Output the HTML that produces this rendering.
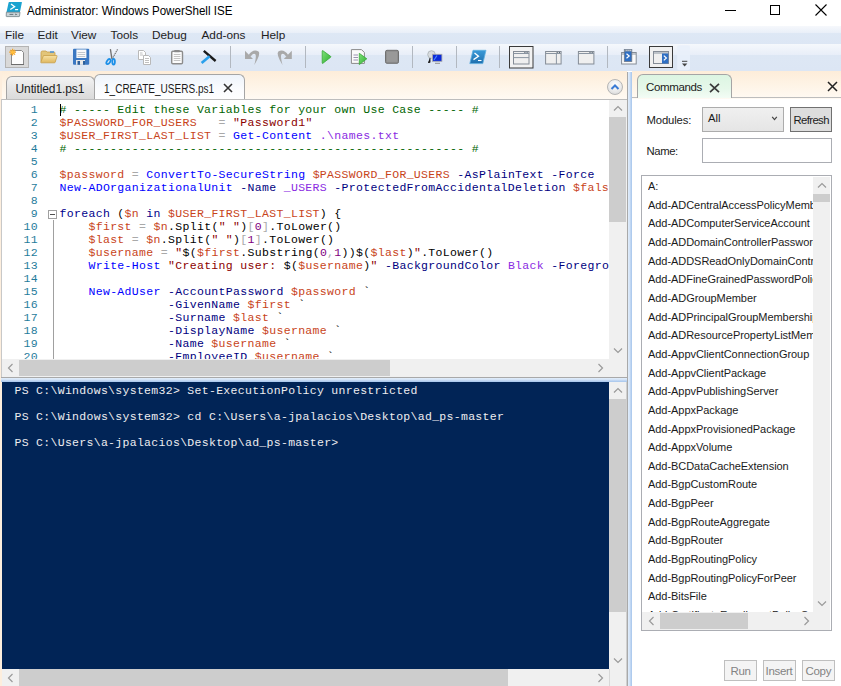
<!DOCTYPE html>
<html><head><meta charset="utf-8">
<style>
*{margin:0;padding:0;box-sizing:border-box}
html,body{width:841px;height:686px;overflow:hidden;background:#fff;position:relative;font-family:"Liberation Sans",sans-serif;font-size:12px;color:#000}
.a{position:absolute}
.t{position:absolute;white-space:pre;line-height:1}
#title{left:27px;top:4.6px;font-size:12.4px;color:#000;transform:scaleX(0.935);transform-origin:0 0}
#menubar{left:0;top:26px;width:841px;height:18px;background:linear-gradient(#f6f8fc 0,#e9eff8 7px,#dee8f5 7px,#dce6f4 100%)}
#toolbar{left:0;top:44px;width:841px;height:27px;background:linear-gradient(#f5f8fc 0,#e8eef8 11px,#dde7f4 11px,#dce6f4 100%)}
.menu{top:30.3px;font-size:11.8px;color:#1e1e1e}
.sep{position:absolute;top:46px;width:1px;height:22px;background:#b2b8c0}
#tabstrip{left:0;top:71px;width:627px;height:28px;background:linear-gradient(#fdedd9,#fffaf3)}
#lstrip{left:0;top:71px;width:2px;height:615px;background:#fdeedd}
.code{font-family:"Liberation Mono",monospace;font-size:11.5px;letter-spacing:0.33px;line-height:13px;white-space:pre}
.ln{color:#1f7c9c}
.cm{color:#006400}.vr{color:#c8441a}.st{color:#8b0000}.cd{color:#0000ff}.pa{color:#000080}.op{color:#a9a9a9}.kw{color:#00008b}.nu{color:#800080}.ar{color:#8a2be2}
.sbg{background:#f0f0f0}
.thumb{background:#cdcdcd}
.arr{position:absolute;width:6px;height:6px;border-left:1.2px solid #a0a0a0;border-top:1.2px solid #a0a0a0}
</style></head><body>
<!-- title bar -->
<svg class="a" style="left:0;top:0" width="26" height="20" viewBox="0 0 26 20">
<path d="M9.2 2.1H21.6Q22 2.1 21.9 2.6L19.9 12.2H6.5L8.6 2.6Q8.7 2.1 9.2 2.1Z" fill="#1ba3d0"/>
<path d="M6.4 12.2H20L19.5 16.2Q19.4 16.6 19 16.6H6.6Q6.2 16.6 6.2 16.2Z" fill="#c9d2d6" stroke="#6f8087" stroke-width="0.8"/>
<path d="M9.5 14.4H13.3" stroke="#5a6a70" stroke-width="0.9"/><path d="M15.3 13.5L17.4 14.4L15.3 15.3Z" fill="#5a6a70"/>
<path d="M11 4.1L14.6 6.8L10.3 9.5" stroke="#fff" stroke-width="1.3" fill="none"/>
<path d="M15.1 9.6H18.1" stroke="#fff" stroke-width="1.2"/>
</svg>
<div class="t" id="title">Administrator: Windows PowerShell ISE</div>
<div class="a" style="left:725px;top:10px;width:11px;height:1px;background:#000"></div>
<div class="a" style="left:770px;top:5px;width:10px;height:10px;border:1px solid #000"></div>
<svg class="a" style="left:815px;top:4px" width="12" height="12" viewBox="0 0 12 12"><path d="M0.5 0.5L11.5 11.5M11.5 0.5L0.5 11.5" stroke="#000" stroke-width="1.1"/></svg>

<!-- menu -->
<div class="a" id="menubar"></div>
<div class="t menu" style="left:5px">File</div>
<div class="t menu" style="left:37.5px">Edit</div>
<div class="t menu" style="left:71px">View</div>
<div class="t menu" style="left:110.5px">Tools</div>
<div class="t menu" style="left:152px">Debug</div>
<div class="t menu" style="left:201.5px">Add-ons</div>
<div class="t menu" style="left:261px">Help</div>

<!-- toolbar -->
<div class="a" id="toolbar"></div>
<svg class="a" style="left:0;top:44px" width="700" height="27" viewBox="0 44 700 27">
<defs>
<linearGradient id="gfold" x1="0" y1="0" x2="0" y2="1"><stop offset="0" stop-color="#f7e2a6"/><stop offset="1" stop-color="#dfb75e"/></linearGradient>
<linearGradient id="ggrn" x1="0" y1="0" x2="1" y2="1"><stop offset="0" stop-color="#7ee27a"/><stop offset="1" stop-color="#2fae2f"/></linearGradient>
<linearGradient id="gps" x1="0" y1="0" x2="0" y2="1"><stop offset="0" stop-color="#3a9ad8"/><stop offset="1" stop-color="#1f6fae"/></linearGradient>
</defs>
<!-- new button -->
<rect x="5.5" y="46.5" width="23" height="21" fill="#d9d9d9" stroke="#b4b4b4"/>
<path d="M11.5 50.5H21.5L23.5 52.5V64.5H11.5Z" fill="#fdfdfd" stroke="#8a8a8a"/>
<path d="M11 64.5H24" stroke="#6d6d6d" stroke-width="1"/>
<g stroke="#f6a21e" stroke-width="1.2"><path d="M12.6 48.8V55.6M9.2 52.2H16M10.2 49.8L15 54.6M15 49.8L10.2 54.6"/></g>
<circle cx="12.6" cy="52.2" r="1.6" fill="#ffc040"/>
<!-- open folder -->
<path d="M41 52.5Q41 51 42.5 51H46L47 52H54Q55 52 55 53V61.5H41Z" fill="#e2c57a" stroke="#c9a04a" stroke-width="0.8"/>
<rect x="50" y="51.3" width="4" height="1.4" fill="#3f8de0"/>
<path d="M43.5 55.5H56.5Q57.3 55.5 57 56.3L55.2 62.2Q55 62.8 54.3 62.8H41.3Q40.6 62.8 40.8 62.1Z" fill="url(#gfold)" stroke="#c9a04a" stroke-width="0.8"/>
<!-- save -->
<rect x="73" y="48.8" width="16.2" height="16" rx="1" fill="#3b78c2"/>
<rect x="76.4" y="49.5" width="10" height="8.5" fill="#fafafa"/>
<path d="M77.6 52.5H85.2M77.6 54.5H85.2M77.6 56.5H85.2" stroke="#c2c8ce" stroke-width="1"/>
<rect x="76" y="60" width="9" height="4.8" fill="#e8e8e8"/>
<rect x="77.5" y="61" width="2.5" height="3.8" fill="#2d5f9a"/>
<rect x="83" y="61" width="2" height="3.8" fill="#2d5f9a"/>
<!-- scissors -->
<path d="M110.4 49.2L111.9 58.8" stroke="#6f6f6f" stroke-width="1.3"/>
<path d="M117.6 49.4L112.2 58.8" stroke="#7c7c7c" stroke-width="1.3" stroke-dasharray="1.3 0.7"/>
<ellipse cx="108.5" cy="61.6" rx="1.6" ry="2.8" fill="none" stroke="#1b8fe8" stroke-width="1.8" transform="rotate(35 108.5 61.6)"/>
<ellipse cx="113.6" cy="61.7" rx="1.3" ry="2.8" fill="none" stroke="#1b8fe8" stroke-width="1.8"/>
<!-- copy -->
<path d="M138.5 50.5H143.5L145.5 52.5V59.5H138.5Z" fill="#fff" stroke="#b9b9b9"/>
<path d="M143.5 55.5H148.5L150.5 57.5V64.5H143.5Z" fill="#fff" stroke="#b9b9b9"/>
<path d="M140 53H142.5M140 55H143M145 58.5H149M145 60.5H149M145 62.5H149" stroke="#b0b0b0" stroke-width="0.8"/>
<!-- paste -->
<rect x="171.7" y="51.2" width="10.8" height="12.6" rx="1.2" fill="#fbfbfb" stroke="#8c8c8c" stroke-width="1.4"/>
<rect x="174.3" y="49.9" width="5.4" height="2.4" rx="0.6" fill="#8a8a8a"/>
<path d="M173.8 54.5H180.4M173.8 56.5H180.4M173.8 58.5H180.4M173.8 60.5H180.4" stroke="#c4c4c4" stroke-width="1"/>
<!-- clear (squeegee) -->
<path d="M203.8 50.8L215.6 61" stroke="#1a1a1a" stroke-width="2.4"/>
<path d="M209.6 56.2L201.6 63" stroke="#2aa0ec" stroke-width="2.6"/>
<!-- sep -->
<rect x="230" y="46" width="1" height="22" fill="#b2b8c0"/>
<!-- undo -->
<path d="M245 50.8V59H253Z" fill="#a9a9a9"/>
<path d="M248.5 55.2Q253 48.5 258.5 51.5Q261 54 254.3 65Q256.5 56.5 255.5 54.5Q253.5 52 250.5 56.8Z" fill="#a9a9a9"/>
<!-- redo -->
<path d="M291.8 50.8V59H283.8Z" fill="#a9a9a9"/>
<path d="M288.3 55.2Q283.8 48.5 278.3 51.5Q275.8 54 282.5 65Q280.3 56.5 281.3 54.5Q283.3 52 286.3 56.8Z" fill="#a9a9a9"/>
<rect x="305" y="46" width="1" height="22" fill="#b2b8c0"/>
<!-- run -->
<path d="M322.5 50.8Q322 50.3 323 50.8L330.6 56.3Q331.2 56.8 330.6 57.3L323 63.2Q322.2 63.7 322.2 63V51Z" fill="url(#ggrn)" stroke="#39a839" stroke-width="0.8"/>
<!-- run selection -->
<path d="M351.4 49.6H361.5L364.4 52.5V63.4H351.4Z" fill="#fafafa" stroke="#8a8a8a"/>
<path d="M353.5 55H358M353.5 57.5H358M353.5 60H358" stroke="#8f88a8" stroke-width="0.9"/>
<path d="M359.3 53.3L366.8 58.8L359.3 64.6Z" fill="url(#ggrn)" stroke="#39a839" stroke-width="0.8"/>
<!-- stop -->
<rect x="385.5" y="50.3" width="13" height="13" rx="1.5" fill="#8e8e8e" stroke="#707070"/>
<rect x="387" y="51.8" width="10" height="10" fill="#999"/>
<rect x="412" y="46" width="1" height="22" fill="#b2b8c0"/>
<!-- remote -->
<circle cx="431.5" cy="54.5" r="3.8" fill="#d8dcdf" stroke="#a8b0b4" stroke-width="0.8"/>
<path d="M430 58V62.5H428" stroke="#333" stroke-width="1"/>
<rect x="432.5" y="54.3" width="9.4" height="7" fill="#0a2bd8" stroke="#a9a9a9" stroke-width="0.8"/>
<path d="M434 60L437 55.5" stroke="#4f86ff" stroke-width="1.2"/>
<path d="M435 63.3H440" stroke="#909090" stroke-width="1"/>
<rect x="456" y="46" width="1" height="22" fill="#b2b8c0"/>
<!-- powershell -->
<path d="M473 50.3H486L482.8 63.6H469.8Z" fill="url(#gps)" stroke="#5fb0e0" stroke-width="0.8"/>
<path d="M474.5 53L478.5 56.3L473.5 59.6" stroke="#fff" stroke-width="1.3" fill="none"/>
<path d="M478 60.5H481.5" stroke="#fff" stroke-width="1.1"/>
<rect x="499" y="46" width="1" height="22" fill="#b2b8c0"/>
<!-- layout 1 (selected) -->
<rect x="509.5" y="46.5" width="23.5" height="21.5" fill="#f2f2f2" stroke="#3a3a3a"/>
<rect x="513.5" y="51.5" width="15.5" height="12.5" fill="#efefef" stroke="#848c96"/>
<path d="M513.5 53.5H529M513.5 57.6H529" stroke="#8a95a2" stroke-width="1"/>
<path d="M524.3 52.5H525.5M526.5 52.5H527.7" stroke="#5f6b78" stroke-width="1"/>
<!-- layout 2 -->
<rect x="545.6" y="51.5" width="15.5" height="12.5" fill="#efefef" stroke="#848c96"/>
<path d="M545.6 53.5H561M556.4 53.5V64" stroke="#8a95a2" stroke-width="1"/>
<path d="M556.6 52.5H557.8M558.8 52.5H560" stroke="#5f6b78" stroke-width="1"/>
<!-- layout 3 -->
<rect x="578.4" y="51.5" width="15.5" height="12.5" fill="#efefef" stroke="#848c96"/>
<path d="M578.4 53.5H594" stroke="#8a95a2" stroke-width="1"/>
<path d="M589.4 52.5H590.6M591.6 52.5H592.8" stroke="#5f6b78" stroke-width="1"/>
<rect x="607" y="46" width="1" height="22" fill="#b2b8c0"/>
<!-- show command window -->
<rect x="621.6" y="52.5" width="14.6" height="11.5" fill="#fafafa" stroke="#848c96"/>
<path d="M621.6 54H636" stroke="#8a95a2" stroke-width="1"/>
<rect x="624.3" y="49.5" width="7.5" height="12" fill="#2f6fc3" stroke="#6d7888" stroke-width="0.8"/>
<rect x="624.3" y="49.3" width="7.5" height="2.2" fill="#8a95a2"/>
<path d="M626.5 50.4H627.3M628.5 50.4H629.3M630.3 50.4H631.1" stroke="#fff" stroke-width="0.8"/>
<path d="M626.5 53.8L629.2 56L626.5 58.2" stroke="#fff" stroke-width="1.2" fill="none"/>
<!-- show command pane (selected) -->
<rect x="649.5" y="46.5" width="23" height="21" fill="#f0f0f0" stroke="#3a3a3a"/>
<rect x="653.5" y="51.5" width="15" height="12" fill="#efefef" stroke="#848c96"/>
<path d="M653.5 53H668.5" stroke="#8a95a2" stroke-width="1"/>
<rect x="662" y="53.5" width="6.3" height="10" fill="#2f6fc3"/>
<path d="M663.8 55.6L666.4 58L663.8 60.4" stroke="#fff" stroke-width="1.2" fill="none"/>
<!-- overflow -->
<rect x="677.2" y="45.2" width="12.8" height="25" rx="2" fill="#e9f0fa" opacity="0.85"/>
<path d="M682 61.3H687.3" stroke="#444" stroke-width="1"/>
<path d="M682 63.5H687.3L684.65 66.5Z" fill="#444"/>
</svg>


<!-- tab strip -->
<div class="a" id="tabstrip"></div>
<div class="a" id="lstrip"></div>
<!--TABS-->
<!-- tabs -->
<div class="a" style="left:6px;top:76px;width:89px;height:24px;border:1px solid #a5a5a5;border-bottom:none;border-radius:6px 6px 0 0;background:linear-gradient(#f3f3f3,#e6e6e6 45%,#d9d9d9)"></div>
<div class="t" style="left:15.5px;top:83px;font-size:12px;color:#1b1b1b;letter-spacing:-0.1px">Untitled1.ps1</div>
<div class="a" style="left:94px;top:74px;width:151px;height:26px;border:1px solid #a5a5a5;border-bottom:none;border-radius:6px 6px 0 0;background:linear-gradient(#eef4fb,#fbfcfe 60%,#fff)"></div>
<div class="t" style="left:104px;top:83px;font-size:12px;color:#1b1b1b;transform:scaleX(0.835);transform-origin:0 0">1_CREATE_USERS.ps1</div>
<svg class="a" style="left:223px;top:83px" width="10" height="10" viewBox="0 0 10 10"><path d="M1 1L9 9M9 1L1 9" stroke="#333" stroke-width="1.6"/></svg>
<!-- scroll up circle -->
<div class="a" style="left:607px;top:79px;width:16px;height:16px;border-radius:50%;border:1px solid #b5b5b5;background:radial-gradient(circle at 50% 35%,#ffffff,#e8e8e8 60%,#cfcfcf)"></div>
<svg class="a" style="left:610px;top:83px" width="10" height="8" viewBox="0 0 10 8"><path d="M1.5 6L5 2.5L8.5 6" stroke="#3b7bd4" stroke-width="2" fill="none"/></svg>

<!-- editor frame -->
<div class="a" style="left:1px;top:99px;width:626px;height:1px;background:#bdbdbd"></div>
<div class="a" style="left:1px;top:99px;width:1px;height:278px;background:#c8c8c8"></div>
<div class="a" style="left:2px;top:100px;width:607px;height:259px;background:#fff;overflow:hidden">
 <div class="a code ln" style="left:0;top:2.5px;width:36px;text-align:right">1
2
3
4
5
6
7
8
9
10
11
12
13
14
15
16
17
18
19
20</div>
 <div class="a code" style="left:57.5px;top:2.5px"><span class="cm"># ----- Edit these Variables for your own Use Case ----- #</span>
<span class="vr">$PASSWORD_FOR_USERS</span>   <span class="op">=</span> <span class="st">"Password1"</span>
<span class="vr">$USER_FIRST_LAST_LIST</span> <span class="op">=</span> <span class="cd">Get-Content</span> <span class="ar">.\names.txt</span>
<span class="cm"># ------------------------------------------------------ #</span>

<span class="vr">$password</span> <span class="op">=</span> <span class="cd">ConvertTo-SecureString</span> <span class="vr">$PASSWORD_FOR_USERS</span> <span class="pa">-AsPlainText</span> <span class="pa">-Force</span>
<span class="cd">New-ADOrganizationalUnit</span> <span class="pa">-Name</span> <span class="ar">_USERS</span> <span class="pa">-ProtectedFromAccidentalDeletion</span> <span class="vr">$false</span>

<span class="kw">foreach</span> (<span class="vr">$n</span> <span class="kw">in</span> <span class="vr">$USER_FIRST_LAST_LIST</span>) {
    <span class="vr">$first</span> <span class="op">=</span> <span class="vr">$n</span>.Split(<span class="st">" "</span>)<span class="op">[</span><span class="nu">0</span><span class="op">]</span>.ToLower()
    <span class="vr">$last</span> <span class="op">=</span> <span class="vr">$n</span>.Split(<span class="st">" "</span>)<span class="op">[</span><span class="nu">1</span><span class="op">]</span>.ToLower()
    <span class="vr">$username</span> <span class="op">=</span> <span class="st">"</span>$(<span class="vr">$first</span>.Substring(<span class="nu">0</span><span class="op">,</span><span class="nu">1</span>))$(<span class="vr">$last</span>)<span class="st">"</span>.ToLower()
    <span class="cd">Write-Host</span> <span class="st">"Creating user: </span>$(<span class="vr">$username</span>)<span class="st">"</span> <span class="pa">-BackgroundColor</span> <span class="ar">Black</span> <span class="pa">-ForegroundColor</span> <span class="ar">Cyan</span>

    <span class="cd">New-AdUser</span> <span class="pa">-AccountPassword</span> <span class="vr">$password</span> `
               <span class="pa">-GivenName</span> <span class="vr">$first</span> `
               <span class="pa">-Surname</span> <span class="vr">$last</span> `
               <span class="pa">-DisplayName</span> <span class="vr">$username</span> `
               <span class="pa">-Name</span> <span class="vr">$username</span> `
               <span class="pa">-EmployeeID</span> <span class="vr">$username</span> `</div>
 <div class="a" style="left:57.5px;top:4px;width:1px;height:12px;background:#000"></div>
 <div class="a" style="left:46px;top:110px;width:9px;height:9px;border:1px solid #a0a0a0;background:#fff"></div>
 <div class="a" style="left:48px;top:114px;width:5px;height:1px;background:#505050"></div>
 <div class="a" style="left:51px;top:120px;width:1px;height:140px;background:#a0a0a0"></div>
</div>
<!-- editor v scroll -->
<div class="a sbg" style="left:609px;top:100px;width:18px;height:277px"></div>
<div class="a thumb" style="left:609px;top:117px;width:17px;height:105px"></div>
<svg class="a" style="left:613px;top:105px" width="10" height="7" viewBox="0 0 10 7"><path d="M1 5.5L5 1.5L9 5.5" stroke="#9a9a9a" stroke-width="1.2" fill="none"/></svg>
<svg class="a" style="left:613px;top:347px" width="10" height="7" viewBox="0 0 10 7"><path d="M1 1.5L5 5.5L9 1.5" stroke="#9a9a9a" stroke-width="1.2" fill="none"/></svg>
<!-- editor h scroll -->
<div class="a sbg" style="left:2px;top:359px;width:607px;height:18px"></div>
<div class="a thumb" style="left:19px;top:360px;width:371px;height:16px"></div>
<svg class="a" style="left:7px;top:363px" width="7" height="10" viewBox="0 0 7 10"><path d="M5.5 1L1.5 5L5.5 9" stroke="#9a9a9a" stroke-width="1.2" fill="none"/></svg>
<svg class="a" style="left:597px;top:363px" width="7" height="10" viewBox="0 0 7 10"><path d="M1.5 1L5.5 5L1.5 9" stroke="#9a9a9a" stroke-width="1.2" fill="none"/></svg>
<!-- vertical grey + blue splitter -->
<div class="a" style="left:627px;top:72px;width:1px;height:614px;background:#a9a9a9"></div>
<div class="a" style="left:628px;top:72px;width:4px;height:614px;background:linear-gradient(90deg,#e2eefb 0,#d3e3f7 40%,#b6d0f0 75%,#a7c6ec 100%)"></div>
<!-- horizontal splitter -->
<div class="a" style="left:1px;top:377px;width:626px;height:1px;background:#a9a9a9"></div>
<div class="a" style="left:1px;top:378px;width:626px;height:4px;background:linear-gradient(#e2eefb 0,#d3e3f7 40%,#b6d0f0 75%,#a7c6ec 100%)"></div>

<!--EDITOR-->

<!-- console -->
<div class="a" style="left:2px;top:382px;width:607px;height:287px;background:#012456;overflow:hidden">
 <div class="a code" style="left:12.5px;top:2.2px;color:#eeedf0;letter-spacing:0.3px">PS C:\Windows\system32&gt; Set-ExecutionPolicy unrestricted

PS C:\Windows\system32&gt; cd C:\Users\a-jpalacios\Desktop\ad_ps-master

PS C:\Users\a-jpalacios\Desktop\ad_ps-master&gt;</div>
</div>
<div class="a sbg" style="left:609px;top:382px;width:17px;height:304px"></div>
<div class="a thumb" style="left:609px;top:399px;width:17px;height:213px"></div>
<svg class="a" style="left:613px;top:387px" width="10" height="7" viewBox="0 0 10 7"><path d="M1 5.5L5 1.5L9 5.5" stroke="#9a9a9a" stroke-width="1.2" fill="none"/></svg>
<svg class="a" style="left:613px;top:657px" width="10" height="7" viewBox="0 0 10 7"><path d="M1 1.5L5 5.5L9 1.5" stroke="#9a9a9a" stroke-width="1.2" fill="none"/></svg>
<div class="a sbg" style="left:2px;top:669px;width:607px;height:17px"></div>
<div class="a thumb" style="left:19px;top:669px;width:489px;height:17px"></div>
<svg class="a" style="left:7px;top:673px" width="7" height="10" viewBox="0 0 7 10"><path d="M5.5 1L1.5 5L5.5 9" stroke="#9a9a9a" stroke-width="1.2" fill="none"/></svg>
<svg class="a" style="left:597px;top:673px" width="7" height="10" viewBox="0 0 7 10"><path d="M1.5 1L5.5 5L1.5 9" stroke="#9a9a9a" stroke-width="1.2" fill="none"/></svg>
<div class="a" style="left:609px;top:669px;width:1px;height:17px;background:#d8d8d8"></div>
<div class="a" style="left:626px;top:382px;width:1px;height:304px;background:#d0d0d0"></div>


<!-- commands pane -->
<div class="a" style="left:632px;top:71px;width:209px;height:28px;background:linear-gradient(#fdedd9,#fffaf3)"></div>
<div class="a" style="left:632px;top:97px;width:209px;height:1px;background:#bdbdbd"></div>
<div class="a" style="left:637px;top:74px;width:95px;height:24px;border:1px solid #a5a5a5;border-bottom:none;border-radius:6px 6px 0 0;background:linear-gradient(#dcf5e2,#e6f8ea 60%,#f3fcf5)"></div>
<div class="t" style="left:646px;top:81.5px;font-size:11.5px;color:#1b1b1b;letter-spacing:-0.35px">Commands</div>
<svg class="a" style="left:708.5px;top:82.5px" width="11" height="10" viewBox="0 0 11 10"><path d="M1 0.8L10 9.2M10 0.8L1 9.2" stroke="#3a3a3a" stroke-width="1.7"/></svg>
<svg class="a" style="left:827px;top:81px" width="11" height="11" viewBox="0 0 11 11"><path d="M1 1L10 10M10 1L1 10" stroke="#222" stroke-width="1.5"/></svg>

<div class="t" style="left:646.5px;top:114.5px;font-size:11.3px;color:#1b1b1b;letter-spacing:-0.15px">Modules:</div>
<div class="a" style="left:702px;top:107px;width:82px;height:25px;border:1px solid #acacac;background:linear-gradient(#f0f0f0,#e5e5e5)"></div>
<div class="t" style="left:708px;top:113px;font-size:11.3px;color:#1b1b1b">All</div>
<svg class="a" style="left:771px;top:116px" width="7" height="5" viewBox="0 0 7 5"><path d="M1.2 0.8L3.5 3.6L5.8 0.8" stroke="#444" stroke-width="1.2" fill="none"/></svg>
<div class="a" style="left:790px;top:107px;width:42px;height:25px;border:1px solid #707070;background:#dddddd"></div>
<div class="t" style="left:793.5px;top:114.5px;font-size:11.3px;color:#1b1b1b;letter-spacing:-0.6px">Refresh</div>

<div class="t" style="left:646.5px;top:145.5px;font-size:11.3px;color:#1b1b1b;letter-spacing:-0.4px">Name:</div>
<div class="a" style="left:702px;top:138px;width:130px;height:25px;border:1px solid #abadb3;background:#fff"></div>

<div class="a" style="left:641px;top:175px;width:191px;height:456px;border:1px solid #abadb3;background:#fff;overflow:hidden">
 <div class="a" id="cmdlist" style="left:6px;top:1.2px;width:165px;overflow:hidden;white-space:pre;font-size:11px;line-height:18.64px;color:#1b1b1b;letter-spacing:-0.05px">A:
Add-ADCentralAccessPolicyMember
Add-ADComputerServiceAccount
Add-ADDomainControllerPasswordReplicationPolicy
Add-ADDSReadOnlyDomainControllerAccount
Add-ADFineGrainedPasswordPolicySubject
Add-ADGroupMember
Add-ADPrincipalGroupMembership
Add-ADResourcePropertyListMember
Add-AppvClientConnectionGroup
Add-AppvClientPackage
Add-AppvPublishingServer
Add-AppxPackage
Add-AppxProvisionedPackage
Add-AppxVolume
Add-BCDataCacheExtension
Add-BgpCustomRoute
Add-BgpPeer
Add-BgpRouteAggregate
Add-BgpRouter
Add-BgpRoutingPolicy
Add-BgpRoutingPolicyForPeer
Add-BitsFile
Add-CertificateEnrollmentPolicyServer</div>
 <div class="a sbg" style="left:171px;top:1px;width:17px;height:436px"></div>
 <div class="a thumb" style="left:171px;top:18px;width:17px;height:8px"></div>
 <svg class="a" style="left:175px;top:6px" width="10" height="7" viewBox="0 0 10 7"><path d="M1 5.5L5 1.5L9 5.5" stroke="#9a9a9a" stroke-width="1.2" fill="none"/></svg>
 <svg class="a" style="left:175px;top:424px" width="10" height="7" viewBox="0 0 10 7"><path d="M1 1.5L5 5.5L9 1.5" stroke="#9a9a9a" stroke-width="1.2" fill="none"/></svg>
 <div class="a sbg" style="left:0;top:436px;width:188px;height:18px"></div>
 <div class="a thumb" style="left:18px;top:437px;width:88px;height:16px"></div>
 <svg class="a" style="left:6px;top:440px" width="7" height="10" viewBox="0 0 7 10"><path d="M5.5 1L1.5 5L5.5 9" stroke="#9a9a9a" stroke-width="1.2" fill="none"/></svg>
 <svg class="a" style="left:161px;top:440px" width="7" height="10" viewBox="0 0 7 10"><path d="M1.5 1L5.5 5L1.5 9" stroke="#9a9a9a" stroke-width="1.2" fill="none"/></svg>
</div>

<div class="a" style="left:724px;top:660px;width:33px;height:21px;border:1px solid #bfbfbf;background:#f4f4f4"></div>
<div class="t" style="left:730.5px;top:665.5px;font-size:11.5px;color:#838383;letter-spacing:-0.35px">Run</div>
<div class="a" style="left:763px;top:660px;width:33px;height:21px;border:1px solid #bfbfbf;background:#f4f4f4"></div>
<div class="t" style="left:765.5px;top:665.5px;font-size:11.5px;color:#838383;letter-spacing:-0.3px">Insert</div>
<div class="a" style="left:802px;top:660px;width:33px;height:21px;border:1px solid #bfbfbf;background:#f4f4f4"></div>
<div class="t" style="left:805.5px;top:665.5px;font-size:11.5px;color:#838383;letter-spacing:-0.3px">Copy</div>

</body></html>
